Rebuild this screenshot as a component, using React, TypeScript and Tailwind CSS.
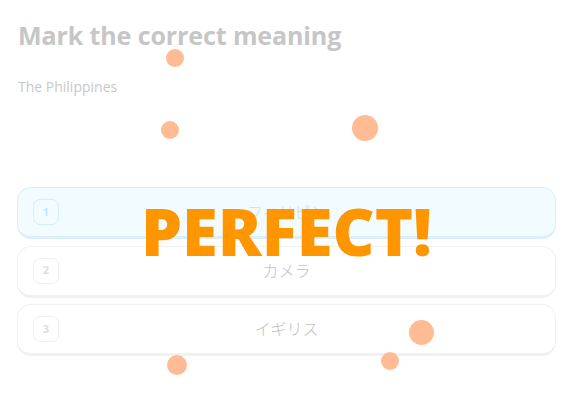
import React from 'react';

const options = [
  { n: 1, label: 'フィリピン', selected: true },
  { n: 2, label: 'カメラ', selected: false },
  { n: 3, label: 'イギリス', selected: false },
];

// confetti dots around the "PERFECT!" burst
const dots = [
  { x: 175, y: 58, r: 9 },
  { x: 170, y: 130, r: 9 },
  { x: 365, y: 128, r: 13 },
  { x: 421, y: 332, r: 12.5 },
  { x: 390, y: 361, r: 9 },
  { x: 177, y: 365, r: 10 },
];

export default function App() {
  return (
    <div
      className="relative w-[562px] h-[402px] overflow-hidden bg-white"
      style={{ fontFamily: '"Open Sans", "Noto Sans CJK JP", sans-serif' }}
    >
      <div className="flex flex-col pl-[17px] pr-[6px] pt-[18px]">
        <h1 className="text-[25px] leading-[34px] font-bold text-[#c6c6c6] pl-[1px] tracking-[-0.1px]">
          Mark the correct meaning
        </h1>
        <p className="mt-[25px] text-[14px] leading-[20px] text-[#c8c8c8] pl-[1px]">The Philippines</p>

        <div className="mt-[90px] flex flex-col gap-[6.5px]">
          {options.map((o) => (
            <div
              key={o.n}
              className={
                'relative flex items-center h-[52px] rounded-[14px] border-[1.5px] border-b-[3px] px-[15px] ' +
                (o.selected ? 'bg-[#f2fbff] border-[#d9f0fb]' : 'bg-white border-[#f1f1f1]')
              }
            >
              <div
                className={
                  'w-[26px] h-[26px] rounded-[7px] border-[1.5px] flex items-center justify-center text-[11px] font-bold ' +
                  (o.selected ? 'border-[#d6eefa] text-[#c6e6f6]' : 'border-[#efefef] text-[#dedede]')
                }
              >
                {o.n}
              </div>
              <div
                className={
                  'absolute inset-x-0 text-center text-[16px] font-light ' +
                  (o.selected ? 'text-[#c6e2f1]' : 'text-[#c2c2c2]')
                }
              >
                {o.label}
              </div>
            </div>
          ))}
        </div>
      </div>

      {dots.map((d, i) => (
        <div
          key={i}
          className="absolute rounded-full bg-[#ffbb94]"
          style={{ left: d.x - d.r, top: d.y - d.r, width: d.r * 2, height: d.r * 2 }}
        />
      ))}

      <div className="absolute left-[17px] right-[6px] top-[197px] flex justify-center">
        <span
          className="text-[65px] leading-[68px] font-extrabold text-[#ff9600]"
          style={{ fontFamily: '"Open Sans", sans-serif' }}
        >
          PERFECT!
        </span>
      </div>
    </div>
  );
}
